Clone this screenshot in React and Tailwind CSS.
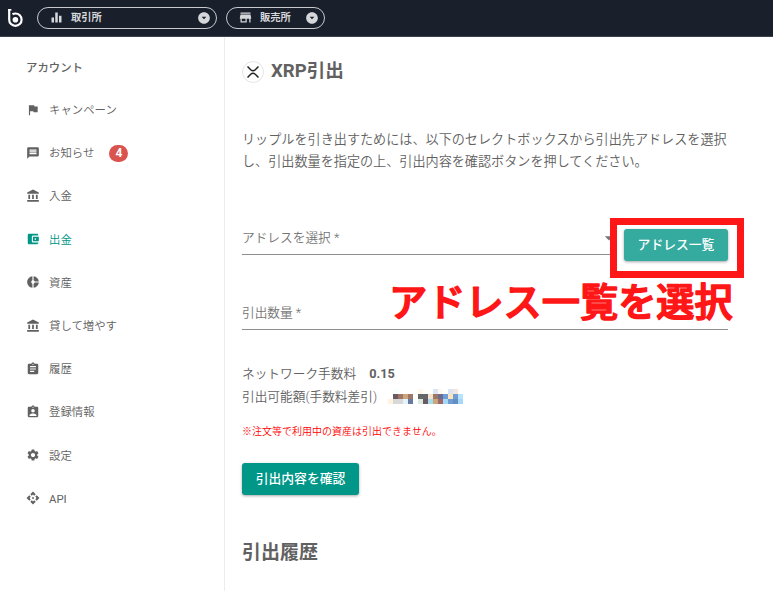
import {
  MdFlag, MdMessage, MdAccountBalance, MdAccountBalanceWallet, MdDonutSmall,
  MdAssignment, MdAssignmentInd, MdSettings, MdApi, MdEqualizer, MdStore,
  MdArrowDropDownCircle, MdArrowDropDown,
} from "react-icons/md";

const NAV = [
  { icon: MdFlag, label: "キャンペーン" },
  { icon: MdMessage, label: "お知らせ", badge: 4 },
  { icon: MdAccountBalance, label: "入金" },
  { icon: MdAccountBalanceWallet, label: "出金", active: true },
  { icon: MdDonutSmall, label: "資産" },
  { icon: MdAccountBalance, label: "貸して増やす" },
  { icon: MdAssignment, label: "履歴" },
  { icon: MdAssignmentInd, label: "登録情報" },
  { icon: MdSettings, label: "設定" },
  { icon: MdApi, label: "API" },
];

// Pixelated balance: one colour per 5px cell, 15 cells per row.
const MOSAIC = [
  ["#fff", "#f5fffc", "#fff", "#fff", "#fff", "#fff", "#fff8e8", "#fff", "#fff", "#dbe5f5", "#fffaf0", "#fff", "#d9e4f2", "#f3e6df", "#fff"],
  ["#fff", "#6b5a62", "#9e7767", "#cda57d", "#9e7767", "#fff", "#666769", "#666769", "#f3e2cf", "#9e7767", "#6b6a92", "#6f9dd3", "#fde4bd", "#6f9dd3", "#b4e3fa"],
  ["#fff3df", "#d8d8d8", "#d8d8d8", "#e5f3fb", "#6679a0", "#fff", "#dce9df", "#6b5a62", "#a5dbea", "#cda57d", "#9e6a67", "#a5d8f8", "#6f9dd3", "#648dc2", "#a5d8f8"],
];

function Header() {
  return (
    <header className="flex h-[37px] items-center border-b border-[#3b434e] bg-[#1a1f2c] pb-px text-[#d5d7da]">
      <svg viewBox="0 0 16 20" className="ml-[7px] h-5 w-4" fill="none">
        <path d="M1 1h3.400v1.600H1z" fill="#fff" />
        <path d="M2.200 1v10.700a6.200 6.200 0 1 0 6.200-6.200c-1.100 0-2.100.3-2.900.8" stroke="#fff" strokeWidth="2.2" />
        <circle cx="8.4" cy="11.7" r="2.8" fill="#fff" />
      </svg>
      <div className="ml-3.5 flex h-[22px] w-[180px] items-center rounded-full border border-[#c8cacd] pl-[11px] pr-[5px]">
        <MdEqualizer className="size-[15px]" />
        <span className="ml-[7px] flex-1 pt-px text-[10.3px] font-bold leading-none">取引所</span>
        <MdArrowDropDownCircle className="size-3.5" />
      </div>
      <div className="ml-[9px] flex h-[22px] w-[99px] items-center rounded-full border border-[#c8cacd] pl-[11px] pr-[5px]">
        <MdStore className="size-[15px]" />
        <span className="ml-[7px] flex-1 pt-px text-[10.3px] font-bold leading-none">販売所</span>
        <MdArrowDropDownCircle className="size-3.5" />
      </div>
    </header>
  );
}

function Sidebar() {
  return (
    <aside className="w-[225px] shrink-0 border-r border-[#ececec] pt-[21px]">
      <h2 className="h-5 pl-[26px] text-[11.4px] font-medium leading-5">アカウント</h2>
      <nav className="mt-[10px]">
        {NAV.map(({ icon: Icon, label, badge, active }) => (
          <a key={label} className={`flex h-[43.2px] items-center pl-[26px] ${active ? "text-[#009688]" : ""}`}>
            <Icon className="size-3.5" />
            <span className={`ml-[9px] pt-px text-[11.4px] leading-5 ${label === "API" ? "" : "font-[350]"}`}>{label}</span>
            {badge && (
              <span className="ml-[15px] mt-px flex h-[17px] w-[19px] items-center justify-center rounded-full bg-[#d9534f] text-[12px] font-bold text-white">{badge}</span>
            )}
          </a>
        ))}
      </nav>
    </aside>
  );
}

function Mosaic() {
  return (
    <span className="ml-[11px] grid grid-cols-[repeat(15,5px)] grid-rows-[repeat(3,5px)]">
      {MOSAIC.flat().map((c, i) => <i key={i} style={{ backgroundColor: c }} />)}
    </span>
  );
}

const BUTTON = "h-8 rounded-[3px] text-[12.8px] font-medium leading-8 text-white shadow-[0_1px_3px_rgba(0,0,0,0.35)]";

export default function App() {
  return (
    <div className="h-[591px] w-[773px] overflow-hidden bg-white font-[Roboto,'Noto_Sans_CJK_JP',sans-serif] text-[#616161]">
      <Header />
      <div className="flex h-[554px]">
        <Sidebar />
        <main className="w-[503px] shrink-0 pl-[17px] pt-[23px]">
          <h1 className="flex h-[23px] items-center">
            <span className="flex size-[22px] items-center justify-center rounded-full border border-[#e5e5e5]">
              <svg viewBox="0 0 12 12" className="size-3" fill="none" stroke="#222" strokeWidth="1.5">
                <path d="M.5.5 3.7 3.7q2.3 2.1 4.6 0L11.5.5M.5 11.5 3.7 8.3q2.3-2.1 4.6 0l3.2 3.2" />
              </svg>
            </span>
            <span className="ml-[7px] text-[18.6px] font-bold leading-none">XRP引出</span>
          </h1>
          <p className="mt-[46px] whitespace-nowrap text-[13.12px] font-[350] leading-[22px]">
            リップルを引き出すためには、以下のセレクトボックスから引出先アドレスを選択<br />
            し、引出数量を指定の上、引出内容を確認ボタンを押してください。
          </p>
          <div className="relative mt-[49px] flex h-[34px] justify-between">
            <div className="flex h-[33px] flex-1 items-center justify-between border-b border-[#8e8e8e] text-[#757575]">
              <span className="text-[12.7px] font-[350]">アドレスを選択 *</span>
              <MdArrowDropDown className="mr-[109px] size-5" />
            </div>
            <div className="absolute -top-[4px] left-[368px] flex h-[60px] w-[134px] items-start border-[7px] border-[#ff1616] bg-white pl-[7px] pt-1">
              <button className={`w-[104px] bg-[#35aa9f] ${BUTTON}`}>アドレス一覧</button>
            </div>
            <svg className="absolute left-[140px] top-[49px] h-[60px] w-[360px]">
              <text x="7" y="45" className="fill-[#ff1616] stroke-[#ff1616] text-[38.2px] font-medium" strokeWidth="1.6" strokeLinejoin="round">
                アドレス一覧を選択
              </text>
            </svg>
          </div>
          <div className="mt-[41px] flex h-[33px] items-center border-b border-[#8e8e8e] text-[12.7px] font-[350] text-[#757575]">引出数量 *</div>
          <div className="mt-8 text-[12.7px] font-[350] leading-[23px]">
            <div className="flex h-[23px]">ネットワーク手数料<b className="ml-[13px] text-[12.7px] font-bold">0.15</b></div>
            <div className="flex h-[23px] items-center">引出可能額(手数料差引)<Mosaic /></div>
          </div>
          <p className="mt-[14px] text-[10px] font-[350] leading-5 text-[#f00]">※注文等で利用中の資産は引出できません。</p>
          <button className={`mt-[21px] block w-[117px] bg-[#009688] ${BUTTON}`}>引出内容を確認</button>
          <h2 className="mt-[44px] text-[19px] font-bold leading-7">引出履歴</h2>
        </main>
      </div>
    </div>
  );
}
